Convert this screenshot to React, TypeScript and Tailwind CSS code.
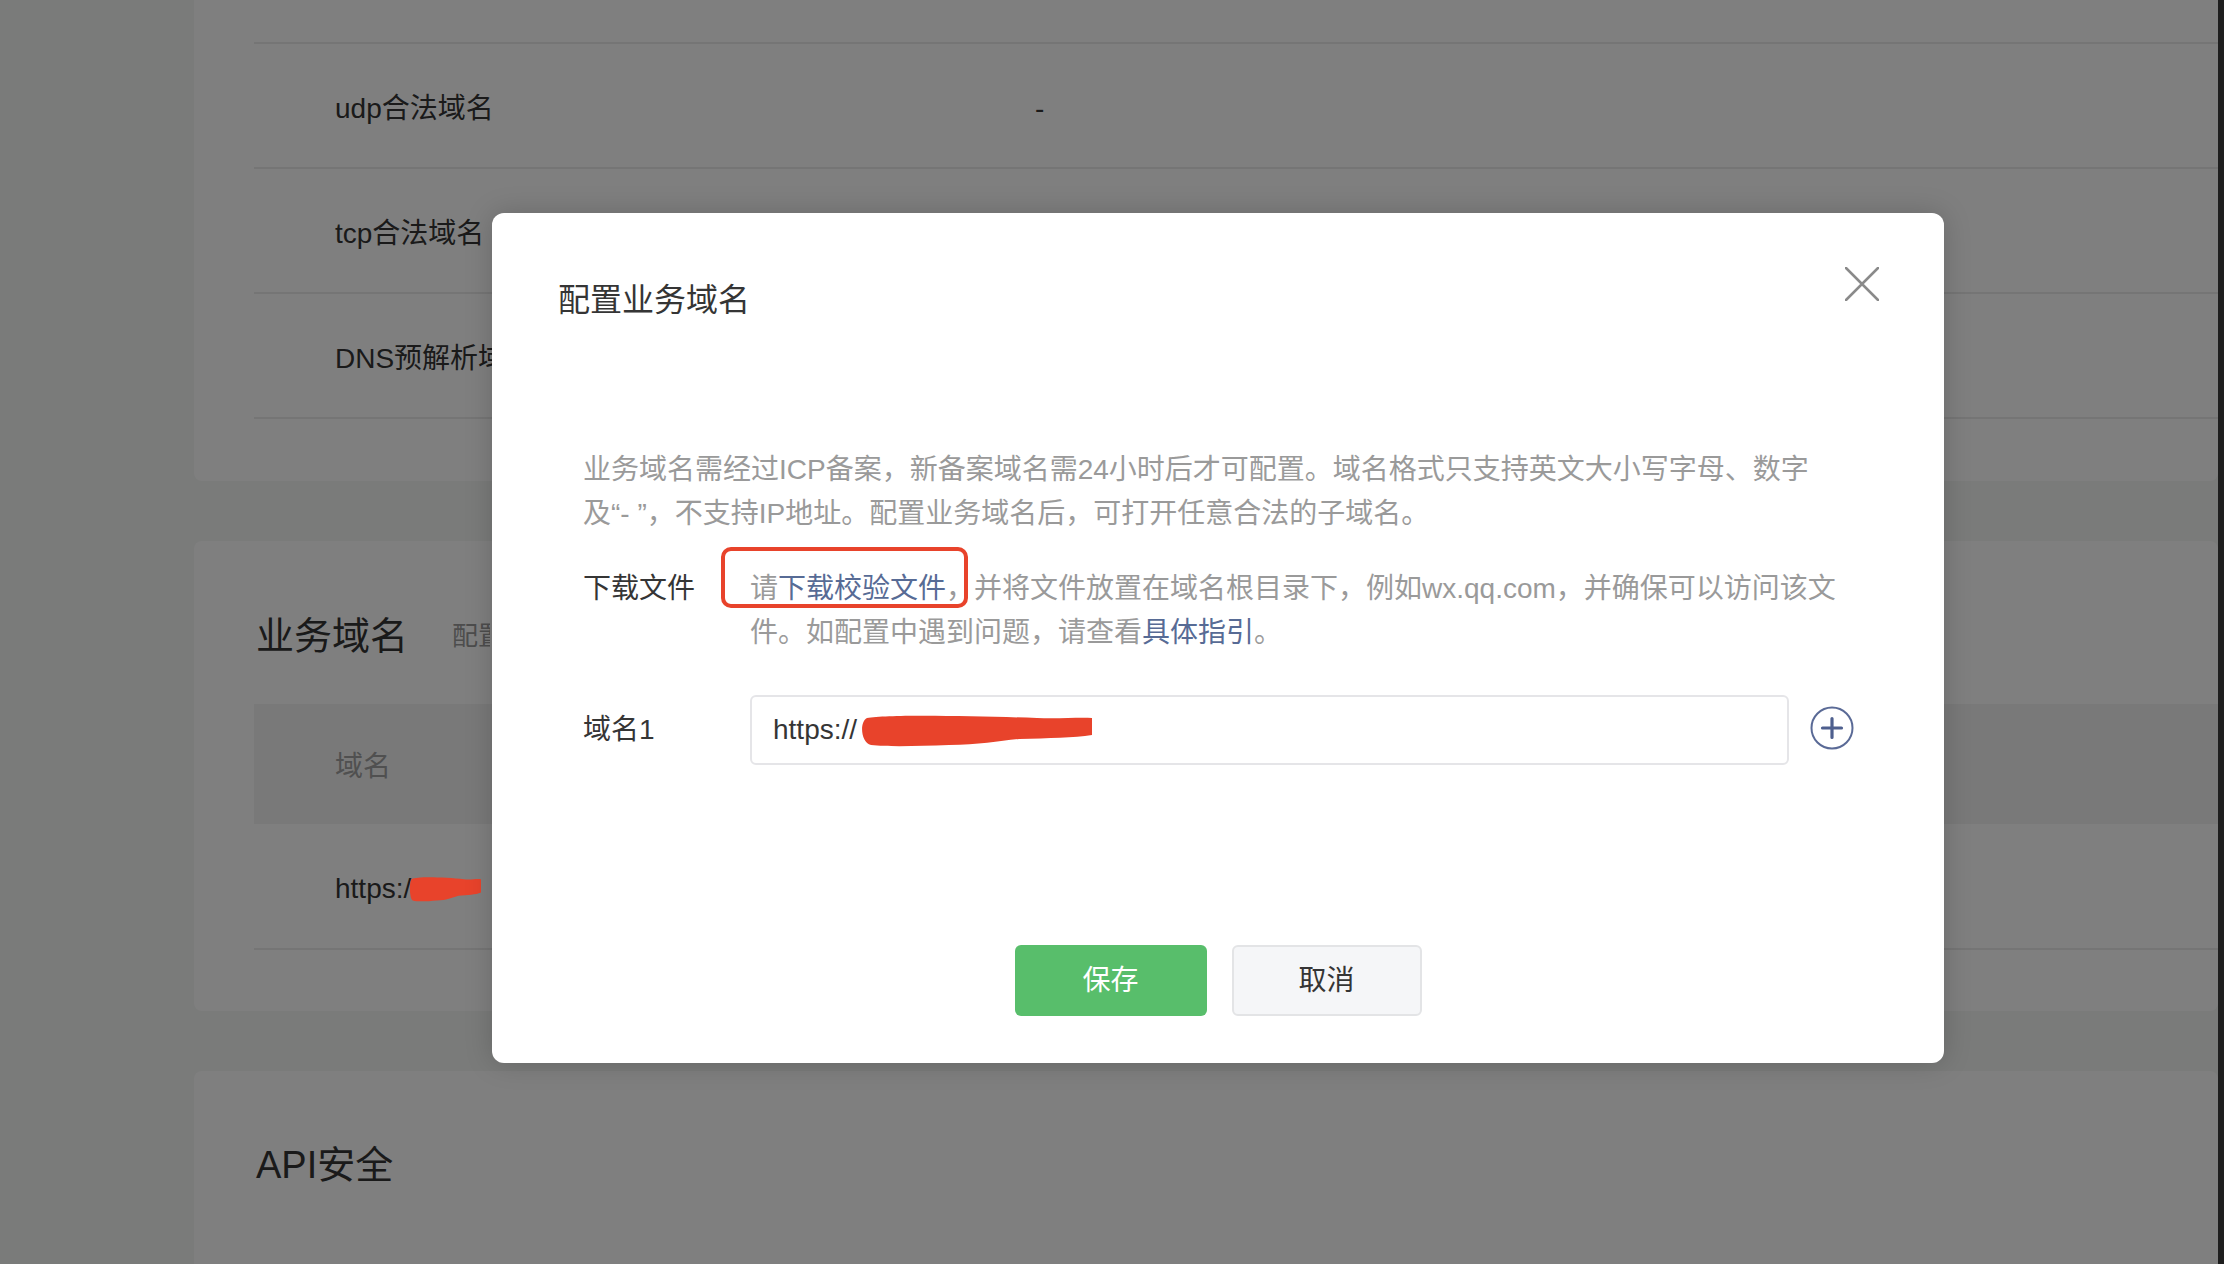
import React from "react";

function Scribble({ className }: { className?: string }) {
  return (
    <svg viewBox="0 0 233 33" className={className} preserveAspectRatio="none">
      <path
        d="M8 4 C 30 0, 120 2, 178 4 C 200 5, 220 3, 233 4 L 233 21 C 215 24, 190 24, 160 25 C 140 27, 120 31, 90 31 C 60 32, 30 33, 12 31 C 2 29, 0 8, 8 4 Z"
        fill="#e8432b"
      />
    </svg>
  );
}

function CloseIcon() {
  return (
    <svg width="34" height="34" viewBox="0 0 34 34" fill="none">
      <path d="M1 1 L33 33 M33 1 L1 33" stroke="#8a8a8a" strokeWidth="2.5" strokeLinecap="round" />
    </svg>
  );
}

function PlusCircle() {
  return (
    <svg width="44" height="44" viewBox="0 0 44 44" fill="none">
      <circle cx="22" cy="22" r="20.5" stroke="#5a6a96" strokeWidth="2" />
      <path d="M12.5 22 H31.5 M22 12.5 V31.5" stroke="#4e5f8e" strokeWidth="3.2" strokeLinecap="round" />
    </svg>
  );
}

const rows = [
  { label: "udp合法域名", value: "-" },
  { label: "tcp合法域名", value: "-" },
  { label: "DNS预解析域名", value: "-" },
];

export default function App() {
  return (
    <div className="relative flex h-[1264px] w-full overflow-hidden bg-[#f4f6f5] font-['Liberation_Sans','Noto_Sans_CJK_SC',sans-serif] text-[#353535]">
      {/* page behind the dialog */}
      <main className="flex flex-1 flex-col gap-[60px] pl-[194px]">
        {/* server domains card, scrolled so only its tail shows */}
        <section className="rounded-b-[8px] bg-white pb-[62px] pl-[60px]">
          <div className="h-[44px] border-b-2 border-[#ebebeb]" />
          {rows.map((r) => (
            <div key={r.label} className="flex h-[125px] items-center border-b-2 border-[#ebebeb] pt-[6px] text-[28px]">
              <span className="w-[781px] shrink-0 pl-[81px]">{r.label}</span>
              <span>{r.value}</span>
            </div>
          ))}
        </section>

        {/* business domain card */}
        <section className="rounded-[8px] bg-white pb-[61px] pl-[60px] pt-[69px]">
          <div className="ml-[2px] flex items-center gap-[44px]">
            <h2 className="text-[38px] leading-[53px]">业务域名</h2>
            <span className="max-w-[38px] overflow-hidden whitespace-nowrap text-[26px] text-[#9a9a9a]">配置</span>
          </div>
          <div className="mt-[41px] flex h-[120px] items-center bg-[#f2f3f3] pl-[81px] pt-[6px] text-[28px] text-[#a0a0a0]">
            域名
          </div>
          <div className="flex h-[126px] items-center border-b-2 border-[#ebebeb] pl-[81px] pt-[6px] text-[28px]">
            <span>https:/</span>
            <Scribble className="relative z-20 -ml-[2px] h-[26px] w-[72px]" />
          </div>
        </section>

        {/* API security card */}
        <section className="h-[400px] rounded-t-[8px] bg-white pl-[62px] pt-[68px]">
          <h2 className="text-[38px] leading-[53px]">API安全</h2>
        </section>
      </main>
      <div className="w-[6px] shrink-0 bg-[#3c3c3c]" />

      {/* mask */}
      <div className="absolute inset-0 z-10 bg-black/50" />

      {/* dialog */}
      <div className="absolute left-[492px] top-[213px] z-30 flex h-[850px] w-[1452px] flex-col rounded-[12px] bg-white shadow-[0_0_28px_rgba(0,0,0,0.18)]">
        <div className="flex justify-between pl-[66px] pr-[65px] pt-[54px]">
          <h3 className="mt-[11px] text-[32px] leading-[45px]">配置业务域名</h3>
          <button className="h-[34px] w-[34px]">
            <CloseIcon />
          </button>
        </div>

        <div className="pl-[91px] text-[28px] leading-[44px]">
          <p className="mt-[125px] text-[#9a9a9a]">
            业务域名需经过ICP备案，新备案域名需24小时后才可配置。域名格式只支持英文大小写字母、数字
            <br />
            及“- ”，不支持IP地址。配置业务域名后，可打开任意合法的子域名。
          </p>

          <div className="mt-[31px] flex">
            <span className="w-[167px] shrink-0">下载文件</span>
            <div className="relative text-[#9a9a9a]">
              <div className="absolute -left-[29px] -top-[20px] h-[61px] w-[247px] rounded-[10px] border-[4px] border-[#e8432b]" />
              请<span className="text-[#576b95]">下载校验文件</span>，并将文件放置在域名根目录下，例如wx.qq.com，并确保可以访问该文
              <br />
              件。如配置中遇到问题，请查看<span className="text-[#576b95]">具体指引</span>。
            </div>
          </div>

          <div className="mt-[40px] flex items-center">
            <span className="w-[167px] shrink-0">域名1</span>
            <div className="flex h-[70px] w-[1039px] items-center rounded-[6px] border-2 border-[#e5e5e8] pl-[21px]">
              <span>https://</span>
              <Scribble className="ml-[2px] h-[33px] w-[233px]" />
            </div>
            <div className="mb-[4px] ml-[21px]">
              <PlusCircle />
            </div>
          </div>
        </div>

        <div className="mt-[180px] flex justify-center gap-[25px] text-[28px]">
          <button className="h-[71px] w-[192px] rounded-[6px] bg-[#58be6b] text-white">保存</button>
          <button className="h-[71px] w-[190px] rounded-[6px] border-2 border-[#e3e4e6] bg-[#f5f6f8] text-[#353535]">
            取消
          </button>
        </div>
      </div>
    </div>
  );
}
